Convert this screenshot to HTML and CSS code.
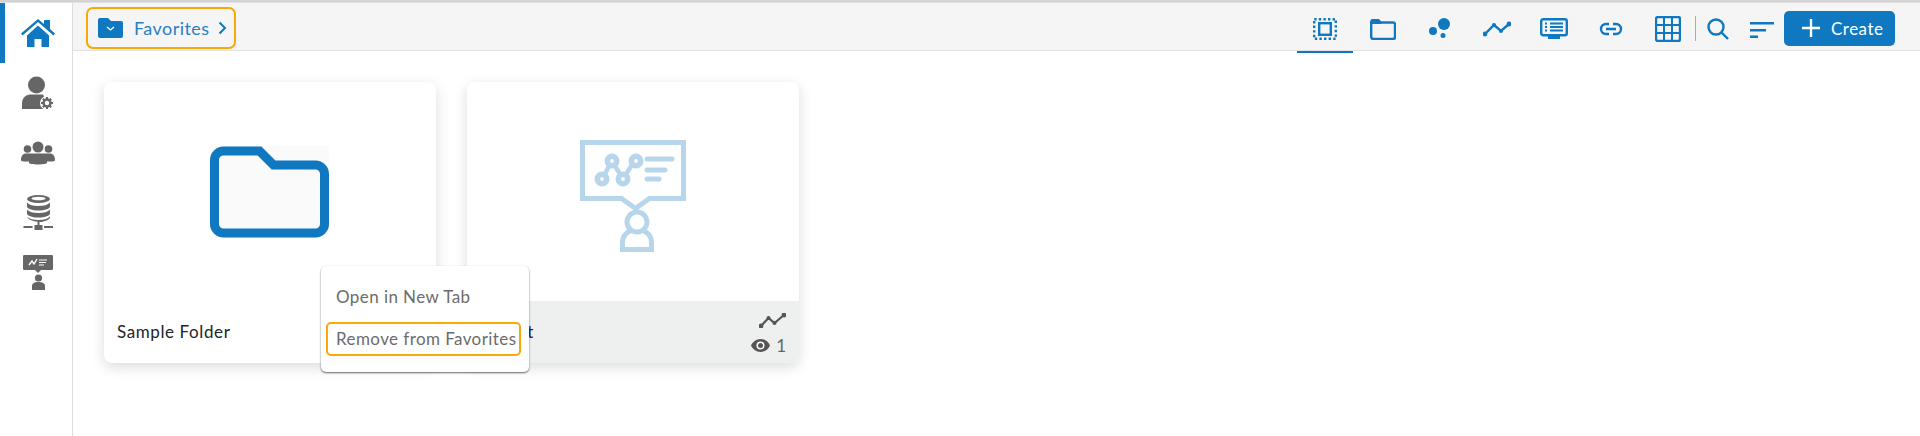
FILE: index.html
```html
<!DOCTYPE html>
<html lang="en">
<head>
<meta charset="utf-8">
<title>Favorites</title>
<link rel="stylesheet" href="styles.css">
</head>
<body>
<div class="strip"></div>
<div class="app">
  <nav class="sidebar">
    <div class="side-item active">
      <svg width="34" height="28" viewBox="20 18 34 28"><path class="blue" d="M20 32.500 37 18l6 5v-4h6v9l5 4.500-1.500 2L37 21 21.500 34.500z"/><path class="blue" d="M26 34.500 37 24.500l11 10V46H40.500v-8h-7v8H26z"/></svg>
    </div>
    <div class="side-item">
      <svg width="34" height="34" viewBox="19 75 34 34"><circle class="grey" cx="34.500" cy="84" r="8.500"/><path class="grey" d="M20 108v-6c0-6 5-8.500 9-8.500h12l4 8.500-4 6z"/><circle class="white" cx="45" cy="102" r="7"/><circle class="grey-line" cx="45" cy="102" r="3.500"/><path class="grey-line dash" d="M45 96v12M39 102h12M40.800 97.800l8.400 8.400M49.200 97.800l-8.400 8.400"/><circle class="white" cx="45" cy="102" r="2.200"/></svg>
    </div>
    <div class="side-item">
      <svg width="34" height="24" viewBox="20 142 34 24"><circle class="grey" cx="26.500" cy="150" r="3.800"/><circle class="grey" cx="47.500" cy="150" r="3.800"/><circle class="grey" cx="37" cy="148" r="5.500"/><path class="grey" d="M20 161c0-4 2-6.500 5-6.500h24c3 0 5 2.500 5 6.500 0 1-1 1.500-5 1.500h-3v1.500c0 .5-4 1.500-9 1.500s-9-1-9-1.500v-1.500h-3c-4 0-5-.5-5-1.500z"/></svg>
    </div>
    <div class="side-item">
      <svg width="30" height="36" viewBox="21 196 30 36"><ellipse class="grey" cx="36.500" cy="200" rx="11.500" ry="4"/><ellipse class="white" cx="36.500" cy="199.500" rx="7" ry="1.800"/><path class="grey" d="M25 203.500c2 2.500 6 3.500 11.500 3.500s9.500-1 11.500-3.500v4c0 2-5 4-11.500 4s-11.500-2-11.500-4zM25 210.500c2 2.500 6 3.500 11.500 3.500s9.500-1 11.500-3.500v4c0 2-5 4-11.500 4s-11.500-2-11.500-4zM25 217.500c2 2.500 6 3.500 11.500 3.500s9.500-1 11.500-3.500v1c0 2-5 4.500-10.500 4.500V226h3v5h-8v-5h3v-3.500c-5.500 0-10-2.500-10-4.500z"/><path class="grey" d="M21.500 227h9v2h-9zM42 227h9v2h-9z"/></svg>
    </div>
    <div class="side-item">
      <svg width="30" height="36" viewBox="21 256 30 36"><path class="grey" d="M22.500 256h27c1 0 1.500.5 1.500 1.500v12c0 1-.5 1.500-1.500 1.500H39l-3 3-3-3H22.500c-1 0-1.500-.5-1.500-1.500v-12c0-1 .5-1.500 1.500-1.500z"/><path class="white-line" d="M27 266l3-4 2 3 3-5"/><path class="white-line thin" d="M37 261h8M37 263.500h7M37 266h5"/><circle class="grey" cx="36.500" cy="279" r="3.600"/><path class="grey" d="M30 291v-4c0-2.500 2.500-4 6.500-4s6.500 1.500 6.500 4v4z"/></svg>
    </div>
  </nav>
  <div class="main">
    <header class="toolbar">
      <div class="crumb">
        <svg class="crumb-folder" width="25" height="20" viewBox="0 0 25 20"><path class="blue" d="M0 2a2 2 0 0 1 2-2h8l3 3h10a2 2 0 0 1 2 2v13a2 2 0 0 1-2 2H2a2 2 0 0 1-2-2z"/><path class="chev" d="M9 9l3.500 3L16 9"/></svg>
        <span class="crumb-text">Favorites</span>
        <svg class="crumb-arrow" width="9" height="14" viewBox="0 0 9 14"><path class="blue-line" d="M1.500 1.500 7 7l-5.500 5.500"/></svg>
      </div>
      <div class="tabs">
        <div class="tab current">
          <svg width="24" height="22" viewBox="0 0 24 22"><rect class="blue-line wide dotted" x="1.200" y="1.200" width="21.600" height="19.600"/><rect class="blue-line wide" x="6.200" y="5.200" width="11.600" height="11.600"/></svg>
        </div>
        <div class="tab">
          <svg width="26" height="21" viewBox="0 0 26 21"><path class="blue-line wide" d="M1.200 3a2 2 0 0 1 2-2h5l2.500 2.500H23a2 2 0 0 1 2 2V18a2 2 0 0 1-2 2H3.200a2 2 0 0 1-2-2z"/><path class="blue" d="M1 2h8l2.500 3H1z"/></svg>
        </div>
        <div class="tab">
          <svg width="22" height="22" viewBox="0 0 22 22"><circle class="blue" cx="15" cy="6" r="6"/><circle class="blue" cx="4" cy="13" r="4"/><circle class="blue" cx="14" cy="17.500" r="2.500"/></svg>
        </div>
        <div class="tab">
          <svg width="28" height="16" viewBox="0 0 28 16"><path class="blue-line wide" d="M2 13 11 4l7 6 8-7"/><circle class="blue" cx="2" cy="13" r="2.400"/><circle class="blue" cx="11" cy="4" r="2"/><circle class="blue" cx="18" cy="10" r="2"/><circle class="blue" cx="26" cy="3" r="2.400"/></svg>
        </div>
        <div class="tab">
          <svg width="28" height="22" viewBox="0 0 28 22"><rect class="blue-line wide" x="1.200" y="1.200" width="25.600" height="16" rx="2"/><path class="blue" d="M8 18h12v3H8z"/><path class="blue-line" d="M5 5.500h2M10 5.500h13M5 9h2M10 9h13M5 12.500h2M10 12.500h13"/></svg>
        </div>
        <div class="tab">
          <svg width="24" height="14" viewBox="0 0 24 14"><path class="blue-line wide" d="M10 2H7a5 5 0 0 0 0 10h3M14 2h3a5 5 0 0 1 0 10h-3M7 7h10"/></svg>
        </div>
        <div class="tab">
          <svg width="26" height="26" viewBox="0 0 26 26"><rect class="blue-line wide" x="1" y="1" width="24" height="24" rx="2"/><path class="blue-line" d="M9 1v24M17 1v24M1 9h24M1 17h24"/></svg>
        </div>
      </div>
      <div class="divider"></div>
      <svg class="search" width="22" height="22" viewBox="0 0 22 22"><circle class="blue-line wide" cx="9" cy="9" r="7.500"/><path class="blue-line wide" d="m14.500 14.500 6.500 6.500"/></svg>
      <svg class="sort" width="24" height="16" viewBox="0 0 24 16"><path class="blue" d="M0 0h24v2.400H0zM0 7h16v2.400H0zM0 13.500h8v2.400H0z"/></svg>
      <button class="create"><svg width="18" height="18" viewBox="0 0 18 18"><path class="plus" d="M9 0v18M0 9h18"/></svg><span>Create</span></button>
    </header>
    <section class="cards">
      <article class="card raised">
        <div class="thumb">
          <svg class="big-folder" width="119" height="92" viewBox="0 0 119 92"><rect class="paper" width="119" height="92"/><path class="folder" d="M4.500 14a9 9 0 0 1 9-9h36l14 14h42a9 9 0 0 1 9 9v50a9 9 0 0 1-9 9h-92a9 9 0 0 1-9-9z"/></svg>
        </div>
        <div class="foot">
          <span class="name">Sample Folder</span>
        </div>
        <div class="menu">
          <div class="menu-item">Open in New Tab</div>
          <div class="menu-item focus">Remove from Favorites</div>
        </div>
      </article>
      <article class="card">
        <div class="thumb">
          <svg width="106" height="121" viewBox="580 131 106 121"><path class="pale" d="M582.500 142.500h101v56h-34l-14 10-14-10h-39z"/><circle class="pale-thick" cx="602" cy="179" r="4.700"/><circle class="pale-thick" cx="612" cy="161" r="4.700"/><circle class="pale-thick" cx="623" cy="179" r="4.700"/><circle class="pale-thick" cx="636" cy="161" r="4.700"/><path class="pale-thin" d="m605 174 4-8M615 166l5 8M626 174l6-9"/><path class="pale round" d="M647 159h25M647 170h18M647 179h12"/><circle class="pale" cx="637" cy="222" r="10"/><path class="pale" d="M622.500 252v-10c0-6 5-11 10-12M651.500 252v-10c0-6-5-11-10-12M622.500 249.500h29"/></svg>
        </div>
        <div class="foot tinted">
          <span class="name">Insight</span>
          <div class="meta">
            <svg width="27" height="15" viewBox="0 0 27 15"><path class="dark-line" d="M2 13l7.500-8 6 5L25 2"/><circle class="dark" cx="2" cy="13" r="2.400"/><circle class="dark" cx="9.500" cy="5" r="2"/><circle class="dark" cx="15.500" cy="10" r="2"/><circle class="dark" cx="25" cy="2" r="2.400"/></svg>
            <div class="views">
              <svg width="19" height="13" viewBox="0 0 19 13"><path class="dark" d="M9.500 0C14 0 17.500 3 19 6.500 17.500 10 14 13 9.500 13S1.500 10 0 6.500C1.500 3 5 0 9.500 0z"/><circle class="white" cx="9.500" cy="6.500" r="4"/><circle class="dark" cx="9.500" cy="6.500" r="2.500"/></svg>
              <span>1</span>
            </div>
          </div>
        </div>
      </article>
    </section>
  </div>
</div>
</body>
</html>
```

FILE: styles.css
```css
* { box-sizing: border-box; }
html, body { margin: 0; height: 100%; background: #fff; overflow: hidden; }
body { font-family: "Lato", "Open Sans", sans-serif; font-size: 17px; letter-spacing: .6px; color: #212529; }
svg { display: block; flex: none; }

.blue { fill: #0f78c1; }
.grey { fill: #666; }
.white { fill: #fff; }
.dark { fill: #555; }
.blue-line { fill: none; stroke: #0f78c1; stroke-width: 2; }
.wide { stroke-width: 2.400; }
.dotted { stroke-dasharray: 2.400 2.200; }
.grey-line { fill: none; stroke: #666; stroke-width: 2.400; }
.dash { stroke-width: 2; }
.white-line { fill: none; stroke: #fff; stroke-width: 1.400; }
.thin { stroke-width: 1; }
.dark-line { fill: none; stroke: #555; stroke-width: 2.200; }
.chev { fill: none; stroke: #fff; stroke-width: 1.300; }
.plus { fill: none; stroke: #fff; stroke-width: 2.400; }

.strip { height: 3px; background: linear-gradient(#dcdcdc, #cbcbcb 40%, #ececec); }
.app { display: flex; height: 433px; }

.sidebar { width: 73px; flex: none; border-right: 1px solid #ddd; }
.side-item { height: 60px; display: flex; align-items: center; justify-content: center; padding-right: 1px; border-left: 5px solid transparent; }
.side-item.active { border-left-color: #0f78c1; }

.main { flex: 1; min-width: 0; }
.toolbar { height: 48px; background: #f5f5f5; border-bottom: 1px solid #e0e0e0; display: flex; align-items: center; padding: 0 25px 0 13px; }
.crumb { width: 150px; height: 42px; margin-top: 8px; margin-bottom: 6px; border: 2px solid #f9a806; border-radius: 7px; display: flex; align-items: center; padding-left: 10px; }
.crumb-text { margin-left: 11px; font-size: 18px; letter-spacing: .45px; color: #2b7fc0; }
.crumb-arrow { margin-left: 8px; }

.tabs { margin-left: auto; display: flex; height: 50px; align-self: flex-start; }
.tab { width: 57px; height: 50px; padding-top: 4px; display: flex; align-items: center; justify-content: center; border-bottom: 2px solid transparent; }
.tab.current { border-bottom-color: #0f78c1; width: 56px; margin-right: 1px; }

.divider { width: 1px; height: 25px; background: #aaa; margin: 3px 0 0 -1px; }
.search { margin: 4px 0 0 11px; }
.sort { margin: 6px 0 0 21px; }
.create { margin: 3px 0 0 10px; width: 111px; height: 35px; background: #0f78c1; border: 0; border-radius: 5px; color: #fff; font: inherit; letter-spacing: .5px; display: flex; align-items: center; padding: 0 0 0 18px; gap: 11px; }

.cards { display: flex; gap: 31px; padding: 31px; }
.card { position: relative; width: 332px; height: 281px; background: #fff; border-radius: 8px; box-shadow: 0 4px 14px rgba(0, 0, 0, .14); display: flex; flex-direction: column; }
.card.raised { z-index: 2; }
.thumb { height: 219px; display: flex; align-items: center; justify-content: center; }
.big-folder { margin-right: 1px; }
.foot { flex: 1; display: flex; align-items: center; justify-content: space-between; padding: 0 13px; border-radius: 0 0 8px 8px; }
.foot.tinted { background: #eef0f0; }
.name { margin-top: -1px; }
.meta { display: flex; flex-direction: column; align-items: flex-end; gap: 11px; letter-spacing: 0; }
.views { display: flex; align-items: center; gap: 6px; color: #666; line-height: 13px; }

.paper { fill: #fafafa; }
.folder { fill: none; stroke: #0f78c1; stroke-width: 9; }
.pale { fill: none; stroke: #b7d6ec; stroke-width: 5; }
.pale-thin { fill: none; stroke: #b7d6ec; stroke-width: 4.500; }
.pale-thick { fill: none; stroke: #b7d6ec; stroke-width: 5.600; }
.round { stroke-linecap: round; }

.menu { position: absolute; left: 217px; top: 184px; width: 208px; height: 106px; background: #fff; border-radius: 5px; box-shadow: 0 1px 2px rgba(0, 0, 0, .6); padding: 14px 5px 0; letter-spacing: .42px; }
.menu-item { height: 34px; margin-bottom: 8px; padding-left: 10px; line-height: 34px; color: #6c6c6c; white-space: nowrap; }
.menu-item.focus { width: 195px; border: 2px solid #f9a806; border-radius: 5px; padding-left: 8px; line-height: 30px; }
```
